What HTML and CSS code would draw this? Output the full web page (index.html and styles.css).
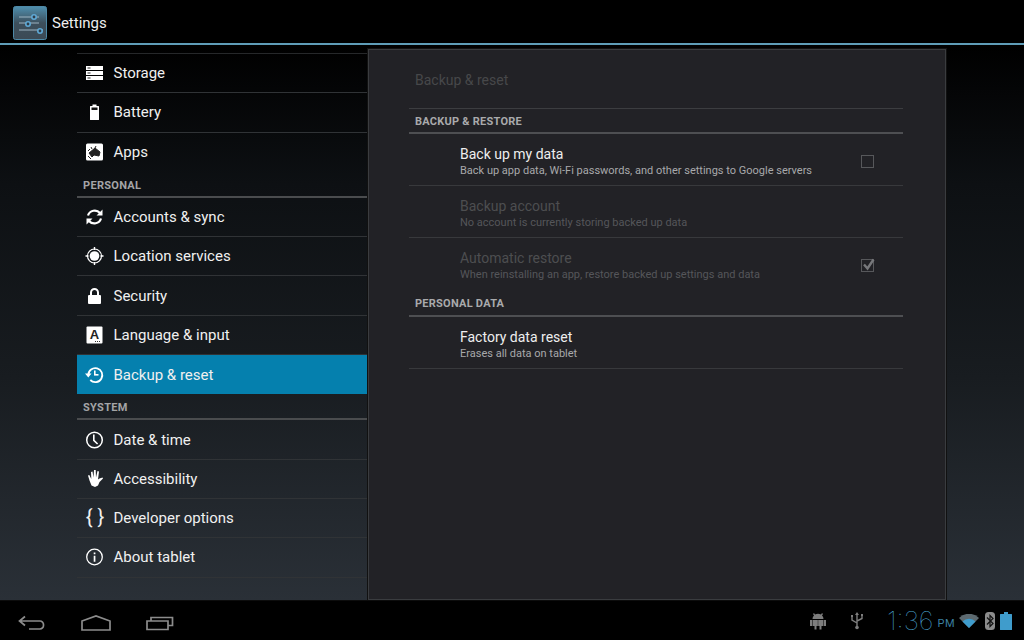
FILE: index.html
```html
<!DOCTYPE html>
<html lang="en">
  <head>
    <meta charset="UTF-8" />
    <title>Settings</title>
    <link rel="stylesheet" href="styles.css">
  </head>
  <body>
    <header class="action-bar">
      <svg class="app-icon" width="34" height="34" viewBox="0 0 34 34">
        <defs>
          <linearGradient id="tile" x1="0" y1="0" x2="0" y2="1">
            <stop offset="0" stop-color="#4f8fae" />
            <stop offset="0.5" stop-color="#3d4f5c" />
            <stop offset="1" stop-color="#3c4a55" />
          </linearGradient>
        </defs>
        <rect x="0.5" y="0.5" width="33" height="33" rx="2" fill="url(#tile)" stroke="#4d88a6" />
        <g stroke="#9db4c2" stroke-width="1" fill="none">
          <path d="M6 12h20M6 18h20M6 25h24" transform="translate(0 -1)" />
        </g>
        <g fill="#2f3d48" stroke="#5fa9d6" stroke-width="1.6">
          <circle cx="21" cy="11" r="2.2" />
          <circle cx="15" cy="18" r="2.2" />
          <circle cx="27" cy="25" r="2.2" />
        </g>
      </svg>
      <span class="app-title">Settings</span>
    </header>

    <main class="content">
      <nav class="side-list">
        <a class="row">
          <svg class="icon" viewBox="0 0 20 20"><path fill="#fff" d="M1 3h17v4H1zM1 8h17v4H1zM1 13h17v4H1z" /><path fill="#222" d="M2.500 4.500h3v1h-3zM2.500 9.500h3v1h-3zM2.500 14.500h3v1h-3z" /></svg>
          Storage
        </a>
        <a class="row">
          <svg class="icon" viewBox="0 0 20 20"><path fill="#fff" d="M7.500 2.500h4v1.500h2a.5 .5 0 0 1 .5 .5v13a.5 .5 0 0 1-.5 .5h-8a.5 .5 0 0 1-.5-.5v-13a.5 .5 0 0 1 .5-.5h2z" /><path fill="#111" d="M6.500 5.500h6v2.500h-6z" /></svg>
          Battery
        </a>
        <a class="row no-line">
          <svg class="icon" viewBox="0 0 20 20"><rect x="1" y="1.500" width="17" height="17" rx="1.500" fill="#fff" /><path fill="#222" d="M4 11l6-5 5 4-1 4-5-1-2 2zM6 5l1 2M11 4l-1 2" stroke="#222" /><path fill="none" stroke="#222" d="M3 14l3 3M3 9l2-2" /></svg>
          Apps
        </a>
        <h3 class="side-header">PERSONAL</h3>
        <a class="row">
          <svg class="icon" viewBox="0 0 20 20"><g fill="none" stroke="#fff" stroke-width="2.200"><path d="M3 8.500a7 7 0 0 1 12-2.500" /><path d="M16 11.500a7 7 0 0 1-12 2.500" /></g><path fill="#fff" d="M17.500 2.500v6h-6zM1.500 17.500v-6h6z" /></svg>
          Accounts &amp; sync
        </a>
        <a class="row">
          <svg class="icon" viewBox="0 0 20 20"><circle cx="9.500" cy="10" r="4.800" fill="#fff" /><circle cx="9.500" cy="10" r="7" fill="none" stroke="#fff" stroke-width="1.200" /><path stroke="#fff" stroke-width="1.400" d="M9.500 1v3M9.500 16v3M.5 10h3M15.500 10h3" /></svg>
          Location services
        </a>
        <a class="row">
          <svg class="icon" viewBox="0 0 20 20"><rect x="3" y="9" width="13" height="9" rx="1" fill="#fff" /><path fill="none" stroke="#fff" stroke-width="2" d="M6 9.500v-3a3.500 3.500 0 0 1 7 0v3" /></svg>
          Security
        </a>
        <a class="row">
          <svg class="icon" viewBox="0 0 20 20"><rect x="1.500" y="1.500" width="16" height="17" rx="1" fill="#fff" /><text class="lang-a" x="9.500" y="13.500" text-anchor="middle">A</text><path stroke="#333" stroke-dasharray="1 1" d="M10 16.500h6" /></svg>
          Language &amp; input
        </a>
        <a class="row selected no-line">
          <svg class="icon" viewBox="0 0 20 20"><path fill="none" stroke="#fff" stroke-width="1.800" d="M3.300 10a7 7 0 1 1 2 5" /><path fill="#fff" d="M0 8.500h6.500l-3.200 4zM9 5.500h1.600v4.500h-1.600z" /><path fill="#fff" d="M9 9h4.500v1.600h-4.500z" /></svg>
          Backup &amp; reset
        </a>
        <h3 class="side-header">SYSTEM</h3>
        <a class="row">
          <svg class="icon" viewBox="0 0 20 20"><circle cx="9.500" cy="10" r="7.800" fill="none" stroke="#fff" stroke-width="1.500" /><path fill="none" stroke="#fff" stroke-width="1.600" d="M8.800 4.500v5.800l3.800 3.700" /></svg>
          Date &amp; time
        </a>
        <a class="row">
          <svg class="icon" viewBox="0 0 20 20"><path fill="#fff" d="M3 6.500l1.300-.5 2 4-.3-7 1.500-.5 1 6 .5-7.500 1.700 0 .3 7.500 1.500-6.500 1.500.5-1 8 1.500-1 3-1 .5 1-3.500 3.500-1.500 3.500-3 1.500-3.500-1.500-2-5z" /></svg>
          Accessibility
        </a>
        <a class="row">
          <span class="icon braces">{ }</span>
          Developer options
        </a>
        <a class="row">
          <svg class="icon" viewBox="0 0 20 20"><circle cx="9.500" cy="10" r="7.800" fill="none" stroke="#fff" stroke-width="1.300" /><path fill="#fff" d="M8.700 5.500h1.700v1.800h-1.700zM8.700 8.800h1.700v6h-1.700z" /></svg>
          About tablet
        </a>
      </nav>

      <section class="panel">
        <div class="panel-title">Backup &amp; reset</div>
        <h4 class="group-header">BACKUP &amp; RESTORE</h4>
        <div class="pref">
          <div class="pref-text">
            <div class="pref-name">Back up my data</div>
            <div class="pref-sub">Back up app data, Wi-Fi passwords, and other settings to Google servers</div>
          </div>
          <span class="check"></span>
        </div>
        <div class="pref disabled">
          <div class="pref-text">
            <div class="pref-name">Backup account</div>
            <div class="pref-sub">No account is currently storing backed up data</div>
          </div>
        </div>
        <div class="pref disabled no-line">
          <div class="pref-text">
            <div class="pref-name">Automatic restore</div>
            <div class="pref-sub">When reinstalling an app, restore backed up settings and data</div>
          </div>
          <span class="check">
            <svg width="16" height="16" viewBox="0 0 16 16"><path fill="none" stroke="#77787b" stroke-width="2.400" d="M3 7.500l3.500 4 6-9" /></svg>
          </span>
        </div>
        <h4 class="group-header short">PERSONAL DATA</h4>
        <div class="pref">
          <div class="pref-text">
            <div class="pref-name">Factory data reset</div>
            <div class="pref-sub">Erases all data on tablet</div>
          </div>
        </div>
      </section>
    </main>

    <footer class="system-bar">
      <div class="nav-buttons">
        <svg width="28" height="16" viewBox="0 0 28 16"><path fill="none" stroke="#8c8c8c" stroke-width="1.700" d="M7 1.500L1.500 6 7 10.500M2 6h20a3.500 3.500 0 0 1 3.500 3.500v1a3.500 3.500 0 0 1-3.500 3.500h-11" /></svg>
        <svg width="30" height="16" viewBox="0 0 30 16"><path fill="none" stroke="#8c8c8c" stroke-width="1.700" d="M1 6L15 1l14 5v9H1z" /></svg>
        <svg width="28" height="16" viewBox="0 0 28 16"><path fill="none" stroke="#8c8c8c" stroke-width="1.700" d="M1 6h21v8.500H1zM5 6V2.500h21.500v8H22" /></svg>
      </div>
      <div class="status">
        <svg class="android" width="16" height="18" viewBox="0 0 16 18"><path fill="#7d7d7d" d="M3 2l1-1 1 1.500a6 6 0 0 1 6 0L12 1l1 1-1 1.500a5 5 0 0 1 1.500 3.500h-11A5 5 0 0 1 4 3.500zM2.500 8h11v6h-2v3.500h-2V14h-3v3.500h-2V14h-2zM0 8h2v6H0zM14 8h2v6h-2z" /><path stroke="#222" stroke-dasharray="1 1" d="M8 8.500v5" /></svg>
        <svg class="usb" width="14" height="18" viewBox="0 0 14 18"><path fill="none" stroke="#7d7d7d" stroke-width="1.400" d="M7 2v13M2 5v3l5 3M12 4v2.500L7 9" /><path fill="#7d7d7d" d="M7 0l2 3H5zM1 3h2v2H1zM11 2h2v2h-2z" /><circle cx="7" cy="15.500" r="1.800" fill="#7d7d7d" /></svg>
        <span class="clock">1:36</span>
        <span class="ampm">PM</span>
        <svg class="wifi" width="20" height="14" viewBox="0 0 20 14"><path fill="#5d6a70" d="M0 4a14 14 0 0 1 20 0l-10 10z" /><path fill="#3f9ccc" d="M3.500 7.500a9 9 0 0 1 13 0L10 14z" /></svg>
        <svg class="bluetooth" width="10" height="18" viewBox="0 0 10 18"><rect width="10" height="18" rx="3.500" fill="#8c8c8c" /><path fill="none" stroke="#111" stroke-width="1.200" d="M2 5.500l6 6-3 3V3.500l3 3-6 6" /></svg>
        <svg class="battery" width="12" height="18" viewBox="0 0 12 18"><path fill="#3f9ccc" d="M4 0h4v2h3.500a.5 .5 0 0 1 .5 .5v15a.5 .5 0 0 1-.5 .5H.5a.5 .5 0 0 1-.5-.5v-15a.5 .5 0 0 1 .5-.5H4z" /></svg>
      </div>
    </footer>
  </body>
</html>
```

FILE: styles.css
```css
* {
  margin: 0;
  padding: 0;
  box-sizing: border-box;
}

body {
  width: 1024px;
  height: 640px;
  overflow: hidden;
  display: flex;
  flex-direction: column;
  background: #000;
  color: #f2f2f2;
  font-family: Roboto, "Liberation Sans", sans-serif;
}

.action-bar {
  height: 45px;
  flex: none;
  display: flex;
  align-items: flex-start;
  background: #000;
  border-bottom: 2px solid #5f9db8;
  padding: 6px 0 0 13px;
}

.app-title {
  margin: 8px 0 0 5px;
  font-size: 15px;
  line-height: 18px;
  color: #eee;
}

.content {
  flex: 1;
  display: flex;
  align-items: flex-start;
  padding: 4px 0 0 77px;
  background: linear-gradient(to bottom, #000 0%, #0d1013 25%, #181c20 60%, #2a3037 100%);
}

.side-list {
  width: 290px;
  margin-top: 4px;
  border-top: 1px solid #26282a;
}

.row {
  height: 39.3px;
  display: flex;
  align-items: center;
  padding-left: 8px;
  font-size: 15px;
  color: #f0f0f0;
  border-bottom: 1px solid #303336;
}

.row.no-line {
  border-bottom: none;
}

.row.selected {
  background: #0580ae;
}

.icon {
  width: 20px;
  height: 20px;
  flex: none;
  margin-right: 8.5px;
}

.braces {
  font-size: 20px;
  line-height: 20px;
  text-align: center;
  margin-top: -3px;
  white-space: pre;
}

.lang-a {
  font-family: "Liberation Sans", sans-serif;
  font-size: 13px;
  font-weight: 700;
  fill: #222;
}

.side-header {
  height: 26px;
  padding: 6px 0 0 6px;
  font-size: 11px;
  line-height: 16px;
  font-weight: 700;
  letter-spacing: 0.3px;
  color: #a4a5a7;
  border-bottom: 2px solid #4a4c4e;
}

.panel {
  width: 578px;
  height: 551px;
  margin-left: 1px;
  padding: 0 42px 0 40px;
  background: #222226;
  border: 1px solid #3a3c3f;
  outline: 1px solid #111;
}

.panel-title {
  height: 59px;
  padding: 21px 0 0 6px;
  font-size: 14px;
  line-height: 18px;
  color: #47484a;
  border-bottom: 1px solid #3c3d40;
}

.group-header {
  height: 25px;
  padding: 6px 0 0 6px;
  font-size: 11px;
  line-height: 14px;
  font-weight: 700;
  letter-spacing: 0.25px;
  color: #a9aaac;
  border-bottom: 2px solid #4e4f52;
}

.group-header.short {
  height: 27px;
  padding-top: 7px;
}

.pref {
  height: 52px;
  display: flex;
  align-items: flex-start;
  padding: 11px 0 0 51px;
  border-bottom: 1px solid #38393c;
}

.pref.no-line {
  border-bottom: none;
}

.pref-text {
  flex: 1;
}

.pref-name {
  font-size: 14px;
  line-height: 18px;
  color: #eee;
}

.pref-sub {
  font-size: 11px;
  line-height: 16px;
  color: #a8a9ab;
}

.disabled .pref-name {
  color: #4d4e50;
}

.disabled .pref-sub {
  color: #55565a;
}

.check {
  width: 13px;
  height: 13px;
  margin: 10px 29px 0 0;
  border: 1px solid #57585b;
  position: relative;
}

.check svg {
  position: absolute;
  left: -1px;
  top: -3px;
}

.system-bar {
  height: 40px;
  flex: none;
  display: flex;
  justify-content: space-between;
  background: #000;
  border-top: 1px solid #0c0c0c;
}

.nav-buttons {
  display: flex;
  align-items: flex-start;
  gap: 35px;
  padding: 14px 0 0 18px;
}

.status {
  display: flex;
  align-items: center;
  height: 39px;
  padding-right: 12px;
}

.android {
  margin-right: 24px;
}

.usb {
  margin-right: 23px;
}

.clock {
  font-family: Inter, Roboto, sans-serif;
  font-size: 26px;
  font-weight: 100;
  line-height: 30px;
  color: #4aa3cf;
}

.ampm {
  margin: 5px 4px 0 4px;
  font-size: 11px;
  color: #3a7f9f;
  letter-spacing: 0.5px;
}

.bluetooth {
  margin: 0 5px 0 6px;
}
```
